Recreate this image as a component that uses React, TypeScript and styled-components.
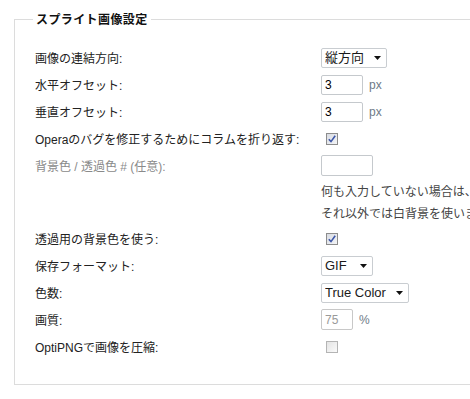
import React from "react";
import styled, { createGlobalStyle } from "styled-components";

const GlobalStyle = createGlobalStyle`
  html, body { margin: 0; padding: 0; background: #fff; overflow: hidden; }
  body {
    font-family: "Liberation Sans", "Noto Sans CJK JP", sans-serif;
    font-size: 12px;
    color: #222;
  }
`;

const Page = styled.div`
  width: 470px;
  height: 399px;
  overflow: hidden;
  padding-top: 11px;
  box-sizing: border-box;
`;

const Fieldset = styled.fieldset`
  margin: 0 0 0 14px;
  width: 640px;
  border: 1px solid #dcdcdc;
  border-right: none;
  padding: 17px 0 24px 20px;
  min-width: 0;
`;

const Legend = styled.legend`
  margin-left: -2px;
  padding: 0 3px;
  font-family: "Noto Sans CJK JP", sans-serif;
  font-weight: bold;
  font-size: 12px;
  letter-spacing: 0.4px;
  line-height: 16px;
  color: #111;
`;

const Row = styled.div`
  display: flex;
  align-items: center;
  height: 27px;
`;

const Label = styled.label<{ $disabled?: boolean }>`
  flex: none;
  width: 286px;
  white-space: nowrap;
  color: ${(p) => (p.$disabled ? "#8a8a8a" : "#222")};
`;

const Help = styled.div`
  padding-left: 286px;
  margin-top: 2px;
  line-height: 22px;
  color: #444;
  white-space: nowrap;
`;

const SelectWrap = styled.span`
  position: relative;
  display: inline-flex;
`;

const Select = styled.select<{ $w: number }>`
  appearance: none;
  -webkit-appearance: none;
  width: ${(p) => p.$w}px;
  height: 20px;
  box-sizing: border-box;
  border: 1px solid #c9cdd1;
  border-radius: 2px;
  background: #fff;
  padding: 0 0 0 3px;
  font-family: "Liberation Sans", "Noto Sans CJK JP", sans-serif;
  font-size: 13px;
  font-weight: 400;
  color: #1a1a1a;
  outline: none;
`;

const Arrow = styled.svg`
  position: absolute;
  right: 6px;
  top: 8px;
  width: 7px;
  height: 4px;
  pointer-events: none;
`;

const Input = styled.input<{ $w: number; $h?: number }>`
  width: ${(p) => p.$w}px;
  height: ${(p) => p.$h ?? 20}px;
  box-sizing: border-box;
  border: 1px solid #c5c9cd;
  border-radius: 2px;
  padding: 0 3px;
  font-family: "Liberation Sans", sans-serif;
  font-size: 12px;
  color: #000;
  background: #fff;
  outline: none;
  &:disabled {
    color: #9a9a9a;
    border-color: #c8c8c8;
  }
`;

const Unit = styled.span<{ $gap: number }>`
  margin-left: ${(p) => p.$gap}px;
  color: #6f7b88;
  font-size: 12px;
`;

const Check = styled.span<{ $checked?: boolean }>`
  margin-left: 5px;
  width: 12px;
  height: 12px;
  box-sizing: border-box;
  display: inline-flex;
  align-items: center;
  justify-content: center;
  border: 1px solid ${(p) => (p.$checked ? "#8c8c8c" : "#b4b4b4")};
  background: ${(p) =>
    p.$checked
      ? "linear-gradient(135deg, #d8dbe2, #f4f5f7)"
      : "linear-gradient(135deg, #e4e4e4, #fafafa)"};
`;

const Dropdown = ({ w, value }: { w: number; value: string }) => (
  <SelectWrap>
    <Select $w={w} defaultValue={value}>
      <option>{value}</option>
    </Select>
    <Arrow viewBox="0 0 7 4">
      <path d="M0 0H7L3.5 4Z" fill="#111" />
    </Arrow>
  </SelectWrap>
);

const CheckBox = ({ checked }: { checked?: boolean }) => (
  <Check $checked={checked}>
    {checked && (
      <svg width="8" height="8" viewBox="0 0 8 8">
        <path d="M0.8 4.2L3 6.6L7.2 0.8" stroke="#3b55a8" strokeWidth="1.6" fill="none" />
      </svg>
    )}
  </Check>
);

export default function App() {
  return (
    <Page>
      <GlobalStyle />
      <Fieldset>
        <Legend>スプライト画像設定</Legend>
        <Row>
          <Label>画像の連結方向:</Label>
          <Dropdown w={66} value="縦方向" />
        </Row>
        <Row>
          <Label>水平オフセット:</Label>
          <Input $w={42} defaultValue="3" />
          <Unit $gap={6}>px</Unit>
        </Row>
        <Row>
          <Label>垂直オフセット:</Label>
          <Input $w={42} defaultValue="3" />
          <Unit $gap={6}>px</Unit>
        </Row>
        <Row>
          <Label>Operaのバグを修正するためにコラムを折り返す:</Label>
          <CheckBox checked />
        </Row>
        <Row>
          <Label $disabled>背景色 / 透過色 # (任意):</Label>
          <Input $w={52} $h={21} defaultValue="" />
        </Row>
        <Help>
          何も入力していない場合は、透過色は使用されません。
          <br />
          それ以外では白背景を使います。
        </Help>
        <Row>
          <Label>透過用の背景色を使う:</Label>
          <CheckBox checked />
        </Row>
        <Row>
          <Label>保存フォーマット:</Label>
          <Dropdown w={52} value="GIF" />
        </Row>
        <Row>
          <Label>色数:</Label>
          <Dropdown w={88} value="True Color" />
        </Row>
        <Row>
          <Label>画質:</Label>
          <Input $w={32} $h={21} defaultValue="75" disabled />
          <Unit $gap={6}>%</Unit>
        </Row>
        <Row>
          <Label>OptiPNGで画像を圧縮:</Label>
          <CheckBox />
        </Row>
      </Fieldset>
    </Page>
  );
}
